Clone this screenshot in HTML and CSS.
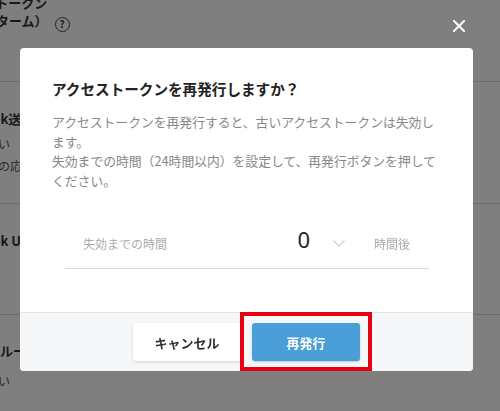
FILE: index.html
```html
<!DOCTYPE html>
<html lang="ja">
<head>
<meta charset="utf-8">
<title>アクセストークン再発行</title>
<link rel="stylesheet" href="styles.css">
</head>
<body>
<div class="page">
  <div class="row row-first">
    <div class="label label-top">
      <span class="line">アクセストークン</span>
      <span class="line">（ロングターム）<span class="help">?</span></span>
    </div>
  </div>
  <div class="row row-webhook">
    <div class="label label-webhook">Webhook送信</div>
    <div class="desc desc-webhook">
      <span class="line">送信しない</span>
      <span class="line">イベントの応答</span>
    </div>
  </div>
  <div class="row row-url">
    <div class="label label-webhook">Webhook URL</div>
  </div>
  <div class="row row-group">
    <div class="label label-group">グループ</div>
    <div class="desc desc-group">
      <span class="line">送信しない</span>
    </div>
  </div>
</div>

<div class="overlay">
  <button class="close" type="button" aria-label="閉じる">
    <svg width="12" height="12" viewBox="0 0 12 12"><path d="M1 1 L11 11 M11 1 L1 11" stroke="#fff" stroke-width="2" stroke-linecap="square" fill="none"/></svg>
  </button>
  <div class="modal">
    <div class="modal-body">
      <h2 class="title">アクセストークンを再発行しますか？</h2>
      <p class="text">アクセストークンを再発行すると、古いアクセストークンは失効し<br>ます。<br>失効までの時間（24時間以内）を設定して、再発行ボタンを押して<br>ください。</p>
      <div class="field">
        <span class="field-label">失効までの時間</span>
        <span class="select">
          <span class="value">0</span>
          <svg class="chevron" width="12" height="7" viewBox="0 0 12 7"><path d="M0.5 0.5 L6 6 L11.5 0.5" stroke="#cfcfcf" stroke-width="1.2" fill="none"/></svg>
        </span>
        <span class="unit">時間後</span>
      </div>
    </div>
    <div class="modal-footer">
      <button class="btn btn-cancel" type="button">キャンセル</button>
      <span class="highlight">
        <button class="btn btn-primary" type="button">再発行</button>
      </span>
    </div>
  </div>
</div>
</body>
</html>
```
FILE: styles.css
```css
html, body {
  margin: 0;
  padding: 0;
}
body {
  width: 500px;
  height: 411px;
  overflow: hidden;
  background: #fff;
  color: #333;
  font-family: "Noto Sans CJK JP", "Noto Sans", sans-serif;
}

/* background page */
.page {
  width: 500px;
}
.row {
  border-bottom: 1px solid #d8d8d8;
  box-sizing: border-box;
}
.row-first {
  height: 88px;
}
.row-webhook {
  height: 122px;
  padding-top: 28px;
}
.row-url {
  height: 111px;
  padding-top: 28px;
}
.row-group {
  border-bottom: none;
  padding-top: 27px;
}
.line {
  display: block;
  white-space: nowrap;
}
.label {
  font-size: 13px;
  line-height: 18px;
  font-weight: bold;
  color: #333;
  white-space: nowrap;
}
.label-top {
  margin-top: -6px;
  margin-left: -56px;
}
.label-webhook {
  margin-left: -52px;
}
.label-group {
  margin-left: -13px;
}
.help {
  display: inline-flex;
  align-items: center;
  justify-content: center;
  width: 13px;
  height: 13px;
  border: 1.5px solid #444;
  border-radius: 50%;
  font-size: 10px;
  line-height: 1;
  font-weight: bold;
  color: #444;
  margin-left: 7px;
  vertical-align: -2px;
}
.desc {
  font-size: 12px;
  line-height: 22px;
  color: #555;
  margin-left: -50px;
}
.desc-webhook {
  margin-top: 5px;
}
.desc-group {
  margin-top: 10px;
}

/* overlay + modal */
.overlay {
  position: fixed;
  inset: 0;
  background: rgba(0, 0, 0, 0.5);
  padding: 48px 0 0 20px;
  box-sizing: border-box;
}
.close {
  position: absolute;
  top: 20px;
  right: 35px;
  width: 12px;
  height: 12px;
  padding: 0;
  border: none;
  background: none;
  display: block;
}
.close svg {
  display: block;
}
.modal {
  width: 453px;
  height: 323px;
  background: #fff;
  border-radius: 4px;
  display: flex;
  flex-direction: column;
}
.modal-body {
  flex: 1;
  padding: 30px 32px 0;
}
.title {
  margin: 0;
  font-size: 14.6px;
  line-height: 22px;
  font-weight: bold;
  color: #222;
}
.text {
  margin: 12px 0 0;
  font-size: 12.8px;
  line-height: 19.5px;
  color: #888;
  white-space: nowrap;
}
.field {
  margin: 28px 12px 0 13px;
  height: 50px;
  border-bottom: 1px solid #d6dae0;
  display: flex;
  align-items: center;
  padding: 0 19px 0 18px;
}
.field-label {
  flex: 1;
  font-size: 12px;
  color: #aaa;
}
.select {
  display: flex;
  align-items: center;
}
.value {
  font-family: "Noto Sans", sans-serif;
  font-size: 22px;
  line-height: 1;
  color: #222;
  margin-top: -8px;
}
.chevron {
  display: block;
  margin-left: 23px;
}
.unit {
  margin-left: 29px;
  font-size: 12px;
  color: #aaa;
}
.modal-footer {
  border-top: 1px solid #e4e6ea;
  background: #f6f7f9;
  border-radius: 0 0 4px 4px;
  padding: 10px;
  display: flex;
  justify-content: center;
  gap: 11px;
}
.btn {
  width: 108px;
  height: 38px;
  border: none;
  border-radius: 3px;
  font-family: "Noto Sans CJK JP", "Noto Sans", sans-serif;
  font-size: 13px;
  font-weight: bold;
  padding: 0;
}
.btn-cancel {
  background: #fff;
  color: #333;
  box-shadow: 0 1px 3px rgba(0, 0, 0, 0.15);
}
.btn-primary {
  background: #4a9fd8;
  color: #fff;
  box-shadow: 0 1px 2px rgba(0, 0, 0, 0.2);
  display: block;
}
.highlight {
  position: relative;
  display: block;
}
.highlight::after {
  content: "";
  position: absolute;
  top: -11px;
  left: -12px;
  right: -12px;
  bottom: -10px;
  border: 4px solid #e60012;
  pointer-events: none;
}
```
